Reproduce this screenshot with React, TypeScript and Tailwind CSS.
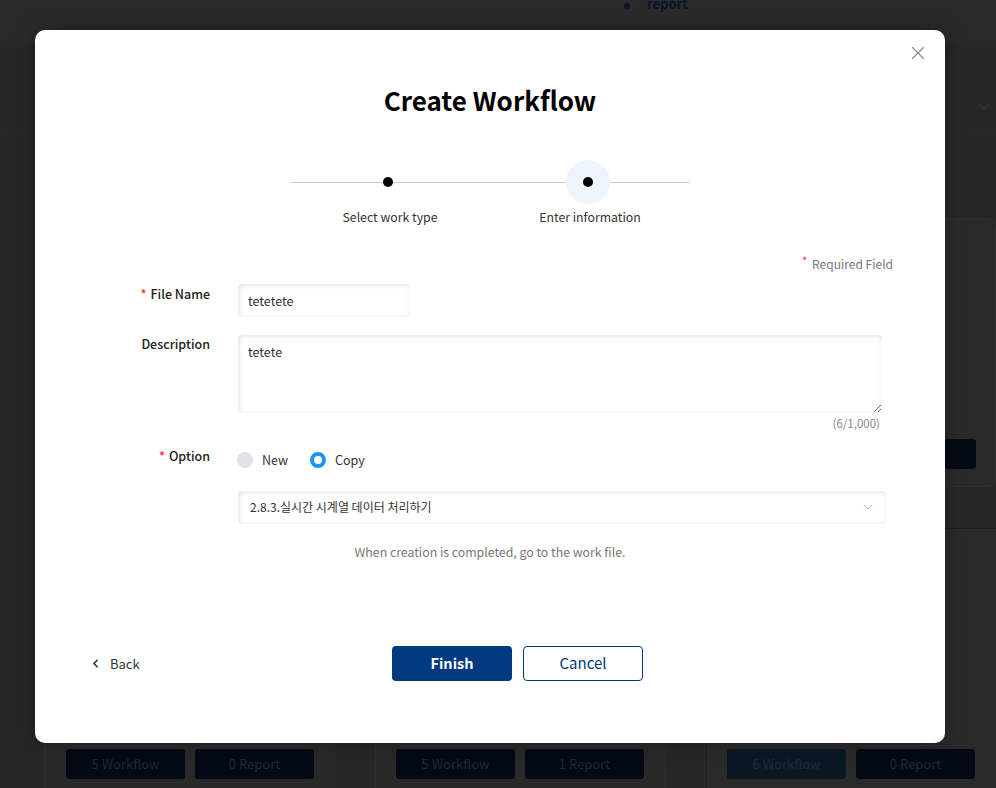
import { ChevronDown, ChevronLeft, X } from 'lucide-react';

const font = { fontFamily: '"Noto Sans CJK KR", "Noto Sans", sans-serif' };

function CardButtons({ items, active }: { items: string[]; active?: boolean }) {
  return (
    <div className="flex gap-[10px]">
      {items.map((label, i) => (
        <div
          key={label}
          className={[
            'flex h-[30px] w-[119px] items-center justify-center rounded-[3px] text-[13px] text-[#202933]',
            active && i === 0 ? 'bg-[#0a1826]' : 'bg-[#030a14]',
          ].join(' ')}
        >
          {label}
        </div>
      ))}
    </div>
  );
}

function Background() {
  return (
    <div className="flex h-[788px] flex-col bg-[#272727]">
      <header className="h-[44px] shrink-0 bg-[#2a2a2a]">
        <div className="-mt-[4px] ml-[624px] flex items-start gap-[17px]">
          <div className="flex flex-col items-center">
            <span className="mt-[7px] h-[6px] w-[6px] rounded-full bg-[#07152a]" />
            <span className="h-[30px] w-px bg-[#222a33]" />
          </div>
          <span className="text-[13px] font-bold leading-[16px] text-[#07152a]">report</span>
        </div>
      </header>
      <div className="flex h-[88px] shrink-0 items-center justify-end border-b border-[#2a2a2a] pr-[4px]">
        <div className="mt-[38px] flex h-[32px] items-center">
          <ChevronDown className="h-4 w-4 text-[#3a3a3a]" strokeWidth={1.5} />
        </div>
      </div>
      <div className="mt-[86px] flex h-[269px] justify-end">
        <div className="flex w-[291px] flex-col justify-end rounded-[8px] border border-[#2f2f2f] bg-[#2a2a2a] px-[20px] pb-[17px]">
          <div className="h-[30px] w-[250px] rounded-[3px] bg-[#030a14]" />
        </div>
      </div>
      <div className="mt-[41px] grid flex-1 grid-cols-[291px_291px_291px] gap-x-[40px] pl-[44px]">
        <div className="flex flex-col justify-end border-l border-[#2f2f2f] bg-[#292929] px-[21px] pb-[9px]">
          <CardButtons items={['5 Workflow', '0 Report']} />
        </div>
        <div className="flex flex-col justify-end border-l border-[#2f2f2f] bg-[#292929] px-[20px] pb-[9px]">
          <CardButtons items={['5 Workflow', '1 Report']} />
        </div>
        <div className="flex flex-col justify-end rounded-tl-[8px] border-l border-t border-[#0f2235] bg-[#2a2a2a] px-[20px] pb-[9px]">
          <CardButtons items={['6 Workflow', '0 Report']} active />
        </div>
      </div>
    </div>
  );
}

function Label({ children, required }: { children: string; required?: boolean }) {
  return (
    <div className="flex h-[18px] items-center justify-end gap-[4px] text-[12.5px] font-medium leading-[18px] text-[#222]">
      {required && <span className="text-[#ff2b2b]">*</span>}
      <span>{children}</span>
    </div>
  );
}

const field =
  'rounded-[4px] bg-white shadow-[inset_1px_1px_5px_rgba(0,0,0,0.13)] text-[12.5px] text-[#333]';

export default function App() {
  return (
    <div className="relative h-[788px] w-full overflow-hidden" style={font}>
      <Background />

      <div className="absolute left-[35px] top-[30px] flex h-[713px] w-[910px] flex-col rounded-[10px] bg-white shadow-[0_0_20px_rgba(0,0,0,0.3)]">
        <button className="absolute right-[16px] top-[12px] text-[#8a8a8a]">
          <X className="h-[22px] w-[22px]" strokeWidth={1.2} />
        </button>

        <h2 className="pt-[52px] text-center text-[26px] font-bold leading-[36px] text-black">
          Create Workflow
        </h2>

        <div className="relative mx-auto mt-[42px] w-[400px]">
          <div className="absolute left-0 right-0 top-[22px] h-px bg-[#cccccc]" />
          <div className="relative grid grid-cols-2">
            <div className="flex flex-col items-center">
              <div className="-ml-[4px] flex h-[44px] w-[44px] items-center justify-center">
                <span className="h-[10px] w-[10px] rounded-full bg-black" />
              </div>
              <span className="mt-[4px] text-[12.3px] leading-[18px] text-[#333]">Select work type</span>
            </div>
            <div className="flex flex-col items-center">
              <div className="-ml-[4px] flex h-[44px] w-[44px] items-center justify-center rounded-full bg-[#eef4fc]">
                <span className="h-[10px] w-[10px] rounded-full bg-black" />
              </div>
              <span className="mt-[4px] text-[12.3px] leading-[18px] text-[#333]">Enter information</span>
            </div>
          </div>
        </div>

        <div className="mt-[29px] flex items-start justify-end gap-[5px] pr-[52px] text-[12px] leading-[18px] text-[#777]">
          <span className="-mt-[4px] text-[11px] text-[#ff2b2b]">*</span>
          <span>Required Field</span>
        </div>

        <div className="mt-[12px] grid grid-cols-[175px_1fr] gap-x-[28px] pr-[59px]">
          <Label required>File Name</Label>
          <input
            readOnly
            value="tetetete"
            className={`${field} -mt-[1px] h-[33px] w-[172px] px-[10px] outline-none`}
          />

          <div className="mt-[18px]">
            <Label>Description</Label>
          </div>
          <div className="mt-[18px] flex flex-col">
            <textarea
              readOnly
              value="tetete"
              className={`${field} h-[78px] w-[644px] resize-y px-[10px] py-[8px] leading-[18px] outline-none`}
            />
            <span className="mt-[2px] w-[642px] text-right text-[11.5px] leading-[16px] text-[#888]">(6/1,000)</span>
          </div>

          <div className="mt-[16px]">
            <Label required>Option</Label>
          </div>
          <div className="mt-[16px] flex flex-col">
            <div className="mt-[4px] flex items-center text-[12.5px] text-[#333]">
              <span className="-ml-[1px] h-[16px] w-[16px] rounded-full bg-[#e1e2e6]" />
              <span className="ml-[9px]">New</span>
              <span className="ml-[22px] h-[16px] w-[16px] rounded-full border-[4.5px] border-[#1e95f3] bg-white" />
              <span className="ml-[9px]">Copy</span>
            </div>
            <div className={`${field} mt-[21px] flex h-[33px] w-[648px] items-center justify-between pl-[12px] pr-[10px] text-[12px]`}>
              <span>2.8.3.실시간 시계열 데이터 처리하기</span>
              <ChevronDown className="h-[16px] w-[16px] text-[#aaa]" strokeWidth={1.3} />
            </div>
          </div>
        </div>

        <p className="mt-[19px] text-center text-[12.3px] leading-[18px] text-[#777]">
          When creation is completed, go to the work file.
        </p>

        <div className="mt-[85px] flex items-center pl-[54px]">
          <div className="flex w-[303px] items-center gap-[8px] text-[13px] text-[#333]">
            <ChevronLeft className="h-[13px] w-[13px]" strokeWidth={3} />
            <span>Back</span>
          </div>
          <div className="flex gap-[11px]">
            <button className="h-[35px] w-[120px] rounded-[4px] bg-[#023a80] text-[14.5px] font-bold text-white">
              Finish
            </button>
            <button className="h-[35px] w-[120px] rounded-[4px] border border-[#023a80] bg-white text-[15px] text-[#023a80]">
              Cancel
            </button>
          </div>
        </div>
      </div>
    </div>
  );
}
